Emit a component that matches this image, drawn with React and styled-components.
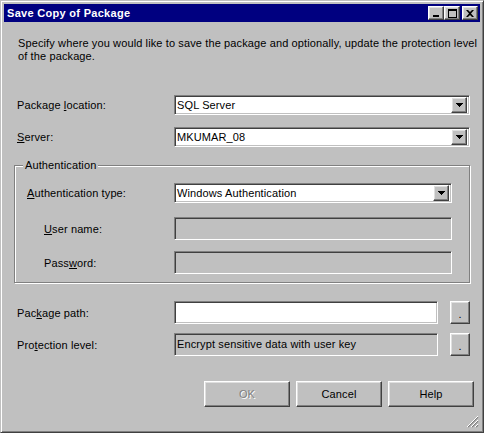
import React from "react";
import styled, { createGlobalStyle } from "styled-components";

const GlobalStyle = createGlobalStyle`
  html, body {
    margin: 0;
    padding: 0;
    background: #c0c0c0;
  }
  body {
    font-family: "Liberation Sans", Arial, sans-serif;
    font-size: 11px;
    letter-spacing: 0.12px;
    color: #000;
  }
`;

const raised = `
  border: 1px solid;
  border-color: #ffffff #404040 #404040 #ffffff;
  box-shadow: inset -1px -1px #808080, inset 1px 1px #dfdfdf;
  background: #c0c0c0;
`;

const sunken = `
  border: 1px solid;
  border-color: #808080 #ffffff #ffffff #808080;
  box-shadow: inset 1px 1px #404040, inset -1px -1px #c0c0c0;
`;

const Window = styled.div`
  box-sizing: border-box;
  position: relative;
  width: 484px;
  height: 433px;
  padding: 3px;
  background: #c0c0c0;
  border: 1px solid;
  border-color: #c0c0c0 #404040 #404040 #c0c0c0;
  box-shadow: inset 1px 1px #ffffff, inset -1px -1px #808080;
  display: flex;
  flex-direction: column;
`;

const TitleBar = styled.div`
  height: 18px;
  flex: none;
  background: #000080;
  display: flex;
  align-items: center;
  padding: 0 2px 0 3px;
`;

const Title = styled.div`
  flex: 1;
  color: #ffffff;
  font-weight: bold;
  font-size: 11px;
  letter-spacing: 0.3px;
`;

const TitleButton = styled.div`
  box-sizing: border-box;
  width: 16px;
  height: 14px;
  margin-left: ${(p) => (p.$gap ? "2px" : "0")};
  display: flex;
  align-items: center;
  justify-content: center;
  ${raised}
`;

const Body = styled.div`
  flex: 1;
  display: flex;
  flex-direction: column;
  padding: 15px 10px 0 10px;
`;

const Description = styled.p`
  margin: 0 0 32px 0;
  padding-left: 4px;
  line-height: 13px;
  white-space: nowrap;
`;

const Row = styled.div`
  display: flex;
  align-items: center;
  margin-top: ${(p) => p.$top || 0}px;
`;

const Label = styled.div`
  flex: none;
  box-sizing: border-box;
  width: ${(p) => p.$width || 160}px;
  padding-left: ${(p) => p.$indent || 3}px;
  white-space: nowrap;
`;

const Combo = styled.div`
  box-sizing: border-box;
  flex: 1;
  height: 20px;
  display: flex;
  align-items: center;
  padding: 0 2px 0 1px;
  background: #ffffff;
  ${sunken}
`;

const ComboText = styled.div`
  flex: 1;
  padding-left: 1px;
  white-space: nowrap;
`;

const DropButton = styled.div`
  box-sizing: border-box;
  width: 16px;
  height: 16px;
  display: flex;
  align-items: center;
  justify-content: center;
  ${raised}
`;

const TextBox = styled.div`
  box-sizing: border-box;
  flex: 1;
  height: 23px;
  display: flex;
  align-items: center;
  padding: 0 2px 2px 2px;
  background: ${(p) => (p.$disabled ? "#c0c0c0" : "#ffffff")};
  white-space: nowrap;
  ${sunken}
`;

const Browse = styled.div`
  box-sizing: border-box;
  flex: none;
  width: 20px;
  height: 23px;
  margin-left: 12px;
  display: flex;
  align-items: center;
  justify-content: center;
  padding-top: 2px;
  ${raised}
`;

const GroupBox = styled.div`
  position: relative;
  margin-top: 18px;
  padding: 17px 17px 8px 9px;
  border: 1px solid #808080;
  box-shadow: inset 1px 1px #ffffff, 1px 1px #ffffff;
`;

const Caption = styled.div`
  position: absolute;
  top: -7px;
  left: 8px;
  padding: 0 2px;
  line-height: 13px;
  background: #c0c0c0;
`;

const ButtonRow = styled.div`
  display: flex;
  justify-content: flex-end;
  gap: 6px;
  margin: 25px -4px 0 0;
`;

const PushButton = styled.div`
  box-sizing: border-box;
  width: 86px;
  height: 26px;
  display: flex;
  align-items: center;
  justify-content: center;
  color: ${(p) => (p.$disabled ? "#808080" : "#000000")};
  text-shadow: ${(p) => (p.$disabled ? "1px 1px #ffffff" : "none")};
  ${raised}
`;

const Grip = styled.svg`
  position: absolute;
  right: 4px;
  bottom: 4px;
`;

const Arrow = () => (
  <svg width="7" height="4" viewBox="0 0 7 4">
    <path d="M0 0h7v1H0zM1 1h5v1H1zM2 2h3v1H2zM3 3h1v1H3z" fill="#000" />
  </svg>
);

const Dropdown = ({ value }) => (
  <Combo>
    <ComboText>{value}</ComboText>
    <DropButton>
      <Arrow />
    </DropButton>
  </Combo>
);

const App = () => (
  <>
    <GlobalStyle />
    <Window>
      <TitleBar>
        <Title>Save Copy of Package</Title>
        <TitleButton>
          <svg width="8" height="7" viewBox="0 0 8 7">
            <rect x="1" y="5" width="6" height="2" fill="#000" />
          </svg>
        </TitleButton>
        <TitleButton>
          <svg width="9" height="9" viewBox="0 0 9 9">
            <path d="M0 0h9v2H0zM0 2h1v7H0zM8 2h1v7H8zM0 8h9v1H0z" fill="#000" />
          </svg>
        </TitleButton>
        <TitleButton $gap>
          <svg width="8" height="7" viewBox="0 0 8 7">
            <path
              d="M0 0h2l2 2 2-2h2L5 3.5 8 7H6L4 5 2 7H0l3-3.5z"
              fill="#000"
            />
          </svg>
        </TitleButton>
      </TitleBar>
      <Body>
        <Description>
          Specify where you would like to save the package and optionally, update the protection level
          <br />
          of the package.
        </Description>
        <Row>
          <Label>
            Package <u>l</u>ocation:
          </Label>
          <Dropdown value="SQL Server" />
        </Row>
        <Row $top={12}>
          <Label>
            <u>S</u>erver:
          </Label>
          <Dropdown value="MKUMAR_08" />
        </Row>
        <GroupBox>
          <Caption>Authentication</Caption>
          <Row>
            <Label $width={150} $indent={0}>
              <u>A</u>uthentication type:
            </Label>
            <Dropdown value="Windows Authentication" />
          </Row>
          <Row $top={14}>
            <Label $width={150} $indent={20}>
              <u>U</u>ser name:
            </Label>
            <TextBox $disabled />
          </Row>
          <Row $top={11}>
            <Label $width={150} $indent={20}>
              Pass<u>w</u>ord:
            </Label>
            <TextBox $disabled />
          </Row>
        </GroupBox>
        <Row $top={18}>
          <Label>
            Pac<u>k</u>age path:
          </Label>
          <TextBox />
          <Browse>.</Browse>
        </Row>
        <Row $top={9}>
          <Label>
            Pro<u>t</u>ection level:
          </Label>
          <TextBox $disabled>Encrypt sensitive data with user key</TextBox>
          <Browse>.</Browse>
        </Row>
        <ButtonRow>
          <PushButton $disabled>OK</PushButton>
          <PushButton>Cancel</PushButton>
          <PushButton>Help</PushButton>
        </ButtonRow>
      </Body>
      <Grip width="12" height="12" viewBox="0 0 12 12">
        <path d="M11 1L1 11M11 5L5 11M11 9L9 11" stroke="#808080" strokeWidth="1.4" />
        <path d="M11 0L0 11M11 4L4 11M11 8L8 11" stroke="#ffffff" strokeWidth="1" />
      </Grip>
    </Window>
  </>
);

export default App;
